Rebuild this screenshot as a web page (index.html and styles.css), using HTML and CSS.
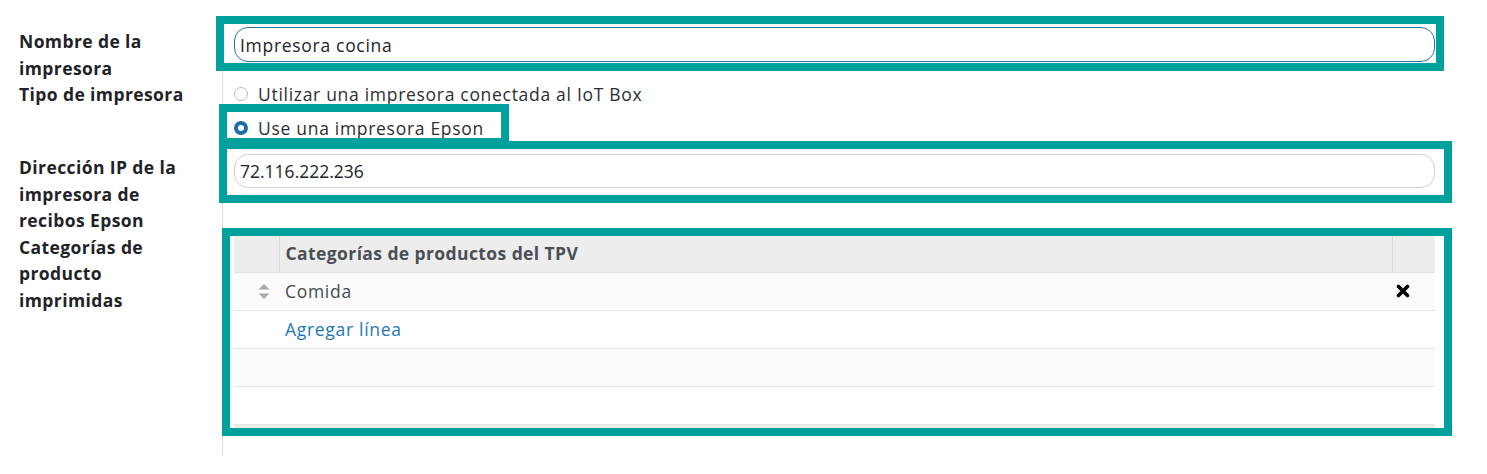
FILE: index.html
```html
<!DOCTYPE html>
<html lang="es">
<head>
<meta charset="utf-8">
<title>Impresora</title>
<link rel="stylesheet" href="styles.css">
</head>
<body>
<div class="form">
  <div class="label label-first">Nombre de la impresora</div>
  <div class="field">
    <div class="hl hl-name">
      <input class="input input-focus" type="text" value="Impresora cocina">
    </div>
  </div>

  <div class="label">Tipo de impresora</div>
  <div class="field field-radios">
    <label class="option">
      <span class="radio"></span>
      <span class="option-text">Utilizar una impresora conectada al IoT Box</span>
    </label>
    <div class="hl hl-radio">
      <label class="option option-checked">
        <span class="radio radio-on"></span>
        <span class="option-text">Use una impresora Epson</span>
      </label>
    </div>
  </div>

  <div class="label">Dirección IP de la impresora de recibos Epson</div>
  <div class="field">
    <div class="hl hl-ip">
      <input class="input input-ip" type="text" value="72.116.222.236">
    </div>
  </div>

  <div class="label">Categorías de producto imprimidas</div>
  <div class="field field-last">
    <div class="hl hl-table">
      <table class="list">
        <colgroup>
          <col class="col-handle">
          <col>
          <col class="col-del">
        </colgroup>
        <thead>
          <tr>
            <th class="th-handle"></th>
            <th class="th-name">Categorías de productos del TPV</th>
            <th class="th-del"></th>
          </tr>
        </thead>
        <tbody>
          <tr class="row-odd">
            <td class="td-handle">
              <svg class="sort" width="12" height="15" viewBox="0 0 12 15"><path d="M6 0 L11.5 5.6 H0.5 Z" fill="#a6abb0"/><path d="M6 15 L11.5 9.4 H0.5 Z" fill="#a6abb0"/></svg>
            </td>
            <td class="td-name">Comida</td>
            <td class="td-del">
              <svg class="del" width="14" height="14" viewBox="0 0 14 14"><path d="M2.5 2.5 L11.5 11.5 M11.5 2.5 L2.5 11.5" stroke="#000" stroke-width="3.6" stroke-linecap="round"/></svg>
            </td>
          </tr>
          <tr>
            <td></td>
            <td class="td-name"><a class="add-line" href="#">Agregar línea</a></td>
            <td></td>
          </tr>
          <tr class="row-odd"><td></td><td></td><td></td></tr>
          <tr><td></td><td></td><td></td></tr>
        </tbody>
        <tfoot>
          <tr><td></td><td></td><td></td></tr>
        </tfoot>
      </table>
    </div>
  </div>
</div>
</body>
</html>
```

FILE: styles.css
```css
* { box-sizing: border-box; }

html, body {
  margin: 0;
  background: #ffffff;
}

body {
  font-family: "Open Sans", "Liberation Sans", sans-serif;
  font-size: 17.5px;
  letter-spacing: 0.7px;
  color: #212529;
}

.form {
  display: grid;
  grid-template-columns: 203px 1fr;
  padding: 27px 52px 0 19px;
}

.label {
  font-weight: 700;
  letter-spacing: 0.4px;
  line-height: 26.5px;
  padding-right: 25px;
  color: #1f2328;
}

.label-first { padding-top: 1px; }

.field {
  border-left: 1px solid #dcdcdc;
  padding-left: 11px;
  min-width: 0;
}

.field-last { padding-bottom: 27px; }

.hl {
  outline: 8px solid #00a19d;
}

.hl-name {
  margin: -3px -1px -1px -10px;
  padding: 3px 1px 1px 10px;
}

.hl-ip {
  margin: -5px -9px -7px -7px;
  padding: 5px 9px 7px 7px;
}

.hl-radio {
  width: fit-content;
  margin: 4px 0 16.5px -7px;
  padding: 6px 17px 0 7px;
  height: 26px;
}

.hl-table {
  margin: 2.5px -9px 0 -4px;
  padding: 0 9px 0 4px;
  height: 192px;
  overflow: hidden;
}

.input {
  display: block;
  width: 100%;
  height: 35px;
  font: inherit;
  letter-spacing: inherit;
  color: #212529;
  background: #fff;
  border: 1px solid #cfcfcf;
  border-radius: 14px;
  padding: 0 5px;
  outline: none;
}

.input-ip {
  height: 34px;
  letter-spacing: 0;
}

.input-focus {
  border-color: #2a6fa8;
}

.option {
  display: flex;
  align-items: center;
  gap: 10px;
  line-height: 26.5px;
  color: #2b2f33;
}

.option-checked { line-height: 20px; }

.radio {
  flex: none;
  width: 14px;
  height: 14px;
  border-radius: 50%;
  border: 1px solid #b5b9bd;
  background: #fff;
}

.radio-on {
  border: 4.5px solid #1f6ea6;
  background: #fff;
}

.list {
  width: 100%;
  margin-top: -2px;
  border-collapse: collapse;
  table-layout: fixed;
  color: #454b51;
}

.col-handle { width: 45px; }
.col-del { width: 43px; }

.list th {
  height: 38px;
  background: #ededed;
  text-align: left;
  font-weight: 700;
  letter-spacing: 0.4px;
  padding: 0;
  border-bottom: 1px solid #e2e2e2;
}

.th-handle { border-right: 1px solid #dadada; }
.th-del { border-left: 1px solid #dadada; }
.th-name { padding-left: 6px !important; color: #4a4f54; }

.list tbody td {
  height: 38px;
  padding: 0;
  border-bottom: 1px solid #e6e6e6;
  background: #ffffff;
}

.list tbody tr.row-odd td { background: #fbfbfb; }

.list tbody td.td-name { padding-left: 6px; }

.td-handle { padding-left: 24px !important; }
.sort { display: block; }

.list tbody td.td-del { padding-left: 4px; }
.del { display: block; }

.add-line {
  color: #1c78b6;
  text-decoration: none;
}

.list tfoot td {
  height: 10px;
  background: #ececec;
  padding: 0;
}
```
